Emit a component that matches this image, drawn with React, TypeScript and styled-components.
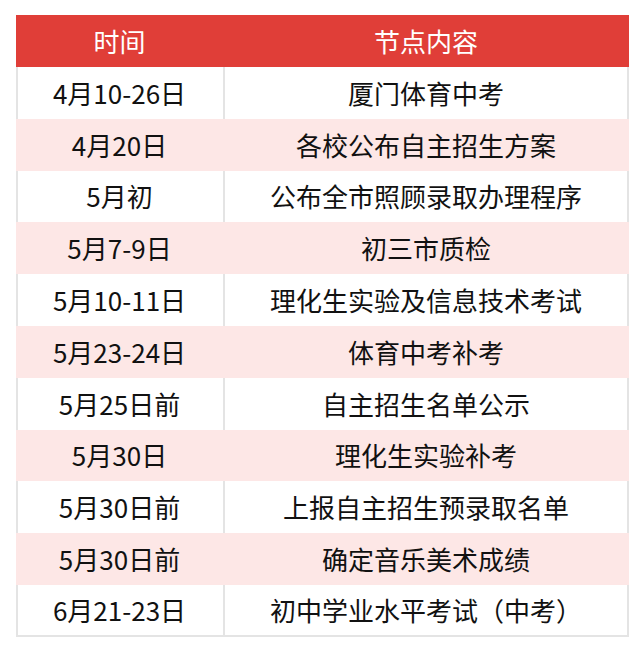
import * as React from 'react'
import styled, { createGlobalStyle } from 'styled-components'

const GlobalStyles = createGlobalStyle`
  html, body {
    margin: 0;
    padding: 0;
    background: #fff;
  }
  body {
    font-family: "Noto Sans CJK SC", "Noto Sans", sans-serif;
  }
`

const Page = styled.div`
  padding: 15px 0 0 16px;
  width: 644px;
  height: 654px;
  box-sizing: border-box;
`

const Table = styled.div`
  width: 613px;
  display: flex;
  flex-direction: column;
`

const Row = styled.div<{ $tone: 'head' | 'odd' | 'even'; $last?: boolean }>`
  display: grid;
  grid-template-columns: 207px 1fr;
  height: ${ p => (p.$tone === 'head' ? '52px' : '51.8px') };
  box-sizing: border-box;
  background: ${ p => (p.$tone === 'head' ? '#e03e38' : p.$tone === 'even' ? '#fde7e6' : '#fff') };
  color: ${ p => (p.$tone === 'head' ? '#fff' : '#111') };
  ${ p => p.$tone === 'odd' && 'box-shadow: inset 2px 0 0 #e4e4e4, inset -2px 0 0 #e4e4e4;' }
  ${ p => p.$last && 'border-bottom: 2px solid #e4e4e4;' }
`

const Cell = styled.div<{ $divider?: boolean }>`
  display: flex;
  align-items: center;
  justify-content: center;
  font-size: 26px;
  line-height: 1;
  white-space: nowrap;
  box-shadow: ${ p => (p.$divider ? 'inset 2px 0 0 #e4e4e4' : 'none') };
`

const rows: [string, string][] = [
  ['4月10-26日', '厦门体育中考'],
  ['4月20日', '各校公布自主招生方案'],
  ['5月初', '公布全市照顾录取办理程序'],
  ['5月7-9日', '初三市质检'],
  ['5月10-11日', '理化生实验及信息技术考试'],
  ['5月23-24日', '体育中考补考'],
  ['5月25日前', '自主招生名单公示'],
  ['5月30日', '理化生实验补考'],
  ['5月30日前', '上报自主招生预录取名单'],
  ['5月30日前', '确定音乐美术成绩'],
  ['6月21-23日', '初中学业水平考试（中考）'],
]

const App: React.FC = () => (
  <Page>
    <GlobalStyles />
    <Table>
      <Row $tone="head">
        <Cell>时间</Cell>
        <Cell>节点内容</Cell>
      </Row>
      { rows.map(([time, content], i) => {
        const odd = i % 2 === 0
        return (
          <Row key={ i } $tone={ odd ? 'odd' : 'even' } $last={ i === rows.length - 1 }>
            <Cell>{ time }</Cell>
            <Cell $divider={ odd }>{ content }</Cell>
          </Row>
        )
      }) }
    </Table>
  </Page>
)

export default App
